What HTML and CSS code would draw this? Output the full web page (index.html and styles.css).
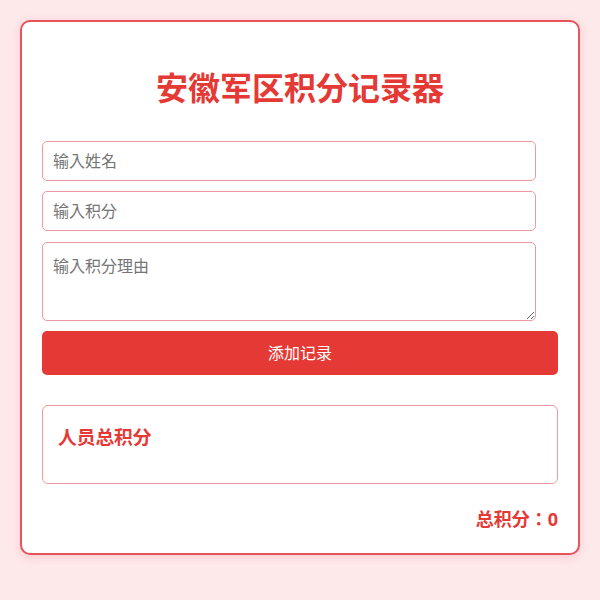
FILE: index.html
```html
<!DOCTYPE html>
<html>
<head>
  <meta charset="UTF-8" />
  <meta name="viewport" content="width=device-width, initial-scale=1.0"/>
  <title>安徽军区积分记录器</title>
  <link rel="stylesheet" href="styles.css">
</head>
<body>
  <div class="container">
    <h1>安徽军区积分记录器</h1>
    <input type="text" id="nameInput" placeholder="输入姓名" />
    <input type="number" id="scoreInput" placeholder="输入积分" />
    <textarea id="reasonInput" rows="3" placeholder="输入积分理由"></textarea>
    <button onclick="addRecord()">添加记录</button>
    <div class="summary" id="summary">
      <h3>人员总积分</h3>
      <div id="personList"></div>
    </div>
    <div class="total">总积分：<span id="totalScore">0</span></div>
  </div>

  <script>
    const totals = {};

    function addRecord() {
      const name = document.getElementById("nameInput").value.trim();
      const score = parseInt(document.getElementById("scoreInput").value, 10);
      if (!name || isNaN(score)) return;
      totals[name] = (totals[name] || 0) + score;
      render();
      document.getElementById("nameInput").value = "";
      document.getElementById("scoreInput").value = "";
      document.getElementById("reasonInput").value = "";
    }

    function render() {
      const list = document.getElementById("personList");
      list.innerHTML = "";
      let sum = 0;
      for (const name in totals) {
        const row = document.createElement("div");
        row.className = "person";
        row.innerText = name + "：" + totals[name];
        list.appendChild(row);
        sum += totals[name];
      }
      document.getElementById("totalScore").innerText = sum;
    }
  </script>
</body>
</html>
```

FILE: styles.css
```css
body {
  font-family: "Noto Sans", "Noto Sans CJK JP", sans-serif;
  margin: 0;
  padding: 20px;
  background: #fde8ea;
}
.container {
  max-width: 600px;
  margin: auto;
  padding: 20px;
  background: #ffffff;
  border: 2px solid #e5535b;
  border-radius: 10px;
  box-shadow: 0 2px 8px rgba(229, 57, 53, 0.15);
}
h1 {
  color: #e53935;
  text-align: center;
  font-size: 32px;
  line-height: 52px;
  margin: 20px 0 27px;
}
input, textarea {
  display: block;
  box-sizing: border-box;
  width: calc(100% - 22px);
  padding: 10px;
  margin-bottom: 10px;
  border: 1px solid #ef9aa2;
  border-radius: 5px;
  font-family: inherit;
  font-size: 16px;
}
input {
  height: 40px;
}
textarea {
  height: 79px;
  margin-top: 11px;
  line-height: normal;
  resize: vertical;
}
input::placeholder, textarea::placeholder {
  color: #757575;
}
button {
  display: block;
  width: 100%;
  padding: 11px;
  border: none;
  border-radius: 5px;
  background-color: #e53935;
  color: white;
  font-family: inherit;
  font-size: 16px;
  line-height: 22px;
  cursor: pointer;
}
button:hover {
  background-color: #d32f2f;
}
.summary {
  margin-top: 30px;
  padding: 15px;
  border: 1px solid #ef9aa2;
  border-radius: 6px;
  min-height: 47px;
}
.summary h3 {
  color: #e53935;
  font-size: 18.72px;
  margin: 1px 0 0;
}
.person {
  padding: 6px 0;
  border-bottom: 1px solid #fbd5d9;
}
.total {
  text-align: right;
  color: #e53935;
  font-weight: bold;
  font-size: 18px;
  margin-top: 21px;
  margin-bottom: 2px;
}
```
